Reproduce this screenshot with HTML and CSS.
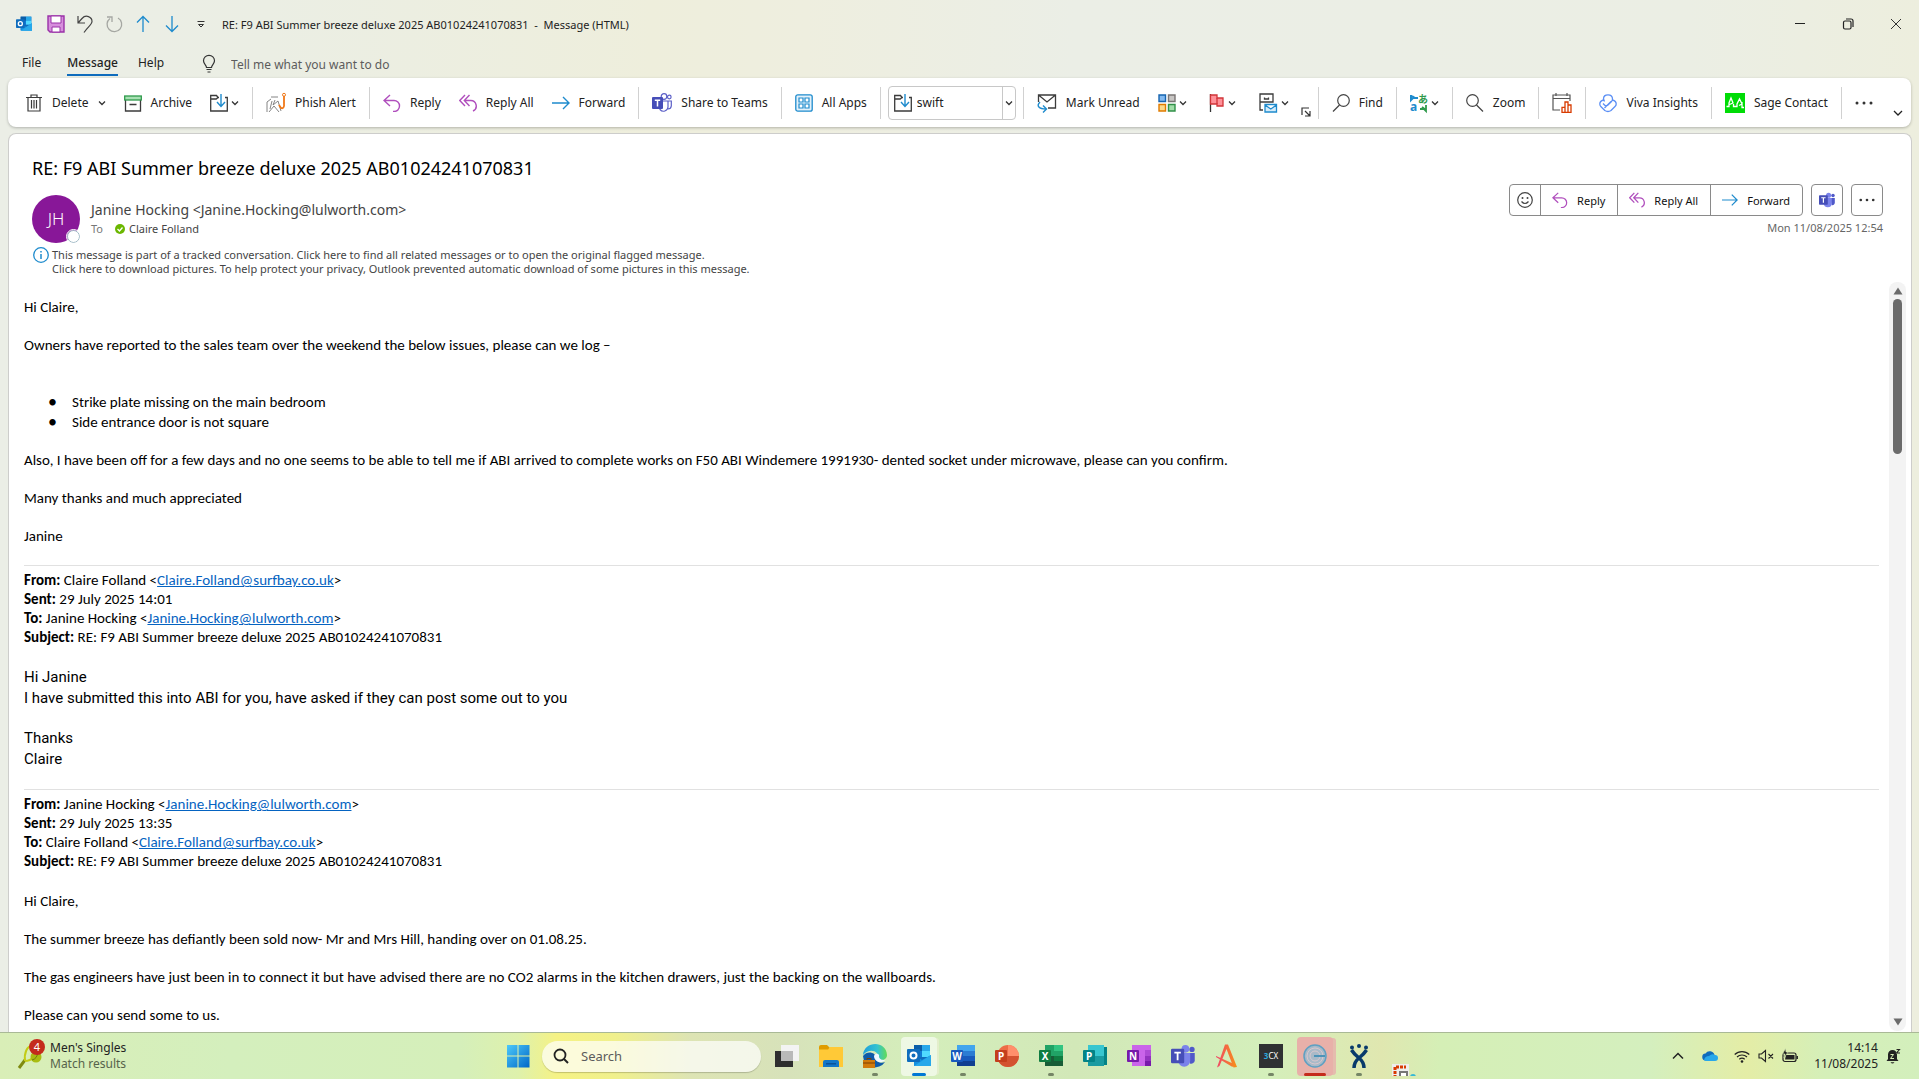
FILE: index.html
```
<!DOCTYPE html>
<html lang="en">
<head>
    <meta charset="UTF-8">
    <meta name="viewport" content="width=device-width, initial-scale=1.0">
    <title>RE: F9 ABI Summer breeze deluxe 2025 AB01024241070831 - Message (HTML)</title>
    <link rel="stylesheet" href="styles.css">
</head>
<body>

<!-- shared icons -->
<svg class="sprite" aria-hidden="true">
    <symbol id="i-chev" viewBox="0 0 8 8"><path d="M1 2.5l3 3 3-3" fill="none" stroke="#333" stroke-width="1.3"/></symbol>
    <symbol id="i-reply" viewBox="0 0 18 18"><path d="M7 1L1 6.500l6 5.500M1.500 6.500H11a5.500 5.500 0 0 1 0 11h-1" fill="none" stroke="#b04fbd" stroke-width="1.400"/></symbol>
    <symbol id="i-replyall" viewBox="0 0 18 18"><path d="M6 1L.8 6.500 6 12M10.500 1L5.300 6.500l5.200 5.500M5.500 6.500h6a5.500 5.500 0 0 1 2.500 10.500" fill="none" stroke="#b04fbd" stroke-width="1.400"/></symbol>
    <symbol id="i-forward" viewBox="0 0 18 18"><path d="M0 9h17M11 3l6 6-6 6" fill="none" stroke="#1e8bcd" stroke-width="1.400"/></symbol>
    <symbol id="i-folder" viewBox="0 0 18 18"><path d="M9 3.500H8L6.500 1.500H.7V17h16.600V3.500H15M.7 5h5.500L8 3.500" fill="none" stroke="#3b3b3b" stroke-width="1.300"/><path d="M11 0v12M7 8l4 4.500L15 8" fill="none" stroke="#1e8bcd" stroke-width="1.400"/></symbol>
    <symbol id="i-teams" viewBox="0 0 20 20"><circle cx="12" cy="4" r="3.200" fill="#7b83eb"/><circle cx="17.500" cy="4.500" r="2.200" fill="#5059c9"/><path d="M14 7.500h5.800v6a3 3 0 0 1-4 2.800z" fill="#5059c9"/><path d="M6 7.500h10v6.500a5 5 0 0 1-10 0z" fill="#7b83eb"/><rect y="4" width="11" height="12" rx="1" fill="#464eb8"/><path d="M2.800 7.200h5.400M5.500 7v6.500" stroke="#fff" stroke-width="1.500"/></symbol>
    <symbol id="i-teams-line" viewBox="0 0 20 20"><g fill="#fff" stroke="#5b5fc7" stroke-width="1.200"><path d="M8 8h8v6a4.500 4.500 0 0 1-8 2.500zM16 8h3.300v5q-.3 3-3.300 3"/><circle cx="12" cy="3.500" r="2.800"/><circle cx="17.300" cy="4" r="1.800"/></g><rect y="4" width="11" height="12" rx="1" fill="#464eb8"/><path d="M2.800 7.200h5.400M5.500 7v6.500" stroke="#fff" stroke-width="1.500"/></symbol>
    <symbol id="i-outlook" viewBox="0 0 24 24"><path d="M7 1h16v20H7z" fill="#0f6cbd"/><path d="M7 1h8v6H7z" fill="#0a5ea8"/><path d="M15 1h8v6h-8z" fill="#28a8ea"/><path d="M15 7h8v6h-8z" fill="#50d9ff"/><path d="M7 7h8v6H7z" fill="#0f78d4"/><path d="M7 11l8 5 9-5v11H7z" fill="#1490df"/><path d="M7 22l17-11v11z" fill="#28a8ea"/><rect y="5" width="13" height="13" rx="1" fill="#0f6cbd"/><circle cx="6.500" cy="11.500" r="3" fill="none" stroke="#fff" stroke-width="2"/></symbol>
    <symbol id="i-dots" viewBox="0 0 18 18"><g fill="#333"><circle cx="2" cy="9" r="1.500"/><circle cx="9" cy="9" r="1.500"/><circle cx="16" cy="9" r="1.500"/></g></symbol>
</svg>

<header class="titlebar">
    <svg class="ic16" viewBox="0 0 24 24"><use href="#i-outlook"/></svg>
    <div class="quick">
        <button aria-label="Save"><svg viewBox="0 0 18 18"><path d="M1 1h16v16H3l-2-2z" fill="#d68fdc" stroke="#9a31a8" stroke-width="1.400"/><path d="M4 1h10v7H4zM5 12h8v5H5z" fill="#fff" stroke="#9a31a8"/></svg></button>
        <button aria-label="Undo"><svg viewBox="0 0 18 18"><path d="M2 1v7h7M2 8l4-4.500C10-1 16 2 16 6.500c0 3-4 5-8 11" fill="none" stroke="#444" stroke-width="1.200"/></svg></button>
        <button aria-label="Redo"><svg viewBox="0 0 18 18"><path d="M2 2h5v5M5 3.500a7.300 7.300 0 1 0 8-.5" fill="none" stroke="#a5a7a2" stroke-width="1.300"/></svg></button>
        <button aria-label="Previous item"><svg viewBox="0 0 18 18"><path d="M9 17V1.500M3 7.500l6-6 6 6" fill="none" stroke="#1e8bcd" stroke-width="1.300"/></svg></button>
        <button aria-label="Next item"><svg viewBox="0 0 18 18"><path d="M9 1v15.500M3 10.500l6 6 6-6" fill="none" stroke="#1e8bcd" stroke-width="1.300"/></svg></button>
        <button aria-label="Customise toolbar"><svg viewBox="0 0 18 18"><path d="M5.500 6.500h7M6.500 9.500L9 12l2.500-2.500z" fill="none" stroke="#333"/></svg></button>
    </div>
    <h1 class="caption">RE: F9 ABI Summer breeze deluxe 2025 AB01024241070831 &nbsp;-&nbsp; Message (HTML)</h1>
    <div class="window-buttons">
        <button aria-label="Minimise"><svg viewBox="0 0 12 12"><path d="M1 5.500h10" stroke="#222"/></svg></button>
        <button aria-label="Restore"><svg viewBox="0 0 12 12"><rect x="1.500" y="3" width="7.500" height="8" rx="1.500" fill="none" stroke="#222" stroke-width="1.200"/><path d="M4 1h5q2 0 2 2v6" fill="none" stroke="#222" stroke-width="1.200"/></svg></button>
        <button aria-label="Close"><svg viewBox="0 0 12 12"><path d="M1 1l10 10M11 1L1 11" stroke="#333"/></svg></button>
    </div>
</header>

<nav class="tabs">
    <a href="#">File</a>
    <a href="#" class="active">Message</a>
    <a href="#">Help</a>
    <label class="tell-me">
        <svg viewBox="0 0 14 18"><path d="M4.500 12.500C4.500 10 1.500 9 1.500 5.800a5.500 5.500 0 0 1 11 0c0 3.200-3 4.200-3 6.700zM4.500 14.500h5M5.500 17h3" fill="none" stroke="#333" stroke-width="1.200"/></svg>
        <input type="text" placeholder="Tell me what you want to do">
    </label>
</nav>

<div class="ribbon">
    <button><svg viewBox="0 0 18 18"><path d="M1 3.500h16M6 3V1h6v2M3 3.500V17h12V3.500M6.500 6v8.500M9 6v8.500M11.500 6v8.500" fill="none" stroke="#3b3b3b" stroke-width="1.200"/></svg>Delete<svg class="chev"><use href="#i-chev"/></svg></button>
    <button><svg viewBox="0 0 18 18"><path d="M1.500 6v11h15V6M5.500 10.500h7" fill="none" stroke="#3b3b3b" stroke-width="1.300"/><rect x=".7" y="2" width="16.600" height="4" fill="#a8e0b3" stroke="#2f9a4c" stroke-width="1.300"/></svg>Archive</button>
    <button class="tight" aria-label="Move"><svg><use href="#i-folder"/></svg><svg class="chev"><use href="#i-chev"/></svg></button>
    <span class="sep"></span>
    <button><svg class="w20" viewBox="0 0 20 20"><path d="M1 19V9l4-3M5 4h7M6 8l-2 8M9 7l-2 5 5-4 3 10M3 19l5-6 5 6" fill="none" stroke="#777" stroke-width=".9"/><path d="M13 12l2 3c2 1 3.500-1 3-4V3" fill="none" stroke="#f07818" stroke-width="1.800"/><circle cx="18" cy="1.800" r="1.500" fill="none" stroke="#f07818"/></svg>Phish Alert</button>
    <span class="sep"></span>
    <button><svg><use href="#i-reply"/></svg>Reply</button>
    <button><svg><use href="#i-replyall"/></svg>Reply All</button>
    <button><svg><use href="#i-forward"/></svg>Forward</button>
    <span class="sep"></span>
    <button><svg class="w20"><use href="#i-teams-line"/></svg>Share to Teams</button>
    <span class="sep"></span>
    <button><svg viewBox="0 0 18 18"><rect x=".8" y=".8" width="16.400" height="16.400" rx="2" fill="#e3f1fa" stroke="#1e8bcd" stroke-width="1.300"/><path d="M4 4h4v4H4zM10 4h4v4h-4zM4 10h4v4H4zM10 10h4v4h-4z" fill="#fff" stroke="#1e8bcd" stroke-width="1.200"/></svg>All Apps</button>
    <span class="sep"></span>
    <div class="combo">
        <svg><use href="#i-folder"/></svg>
        <select aria-label="Quick step"><option>swift</option></select>
        <svg class="chev"><use href="#i-chev"/></svg>
    </div>
    <span class="sep"></span>
    <button><svg class="w20" viewBox="0 0 20 20"><path d="M1.500 9V2h17v13H11M1.500 2l8.500 7 8.500-7" fill="none" stroke="#3b3b3b" stroke-width="1.300"/><path d="M3 9c-4 4-1 7 6 7M6 12.500L9.500 16 6 19.500" fill="none" stroke="#1e8bcd" stroke-width="1.400"/></svg>Mark Unread</button>
    <button class="tight" aria-label="Categorise"><svg viewBox="0 0 18 18" stroke-width="1.400"><path d="M1 1h6.500v6.500H1z" fill="#83b9ef" stroke="#1664b0"/><path d="M10.500 1H17v6.500h-6.500z" fill="#c8c6c4" stroke="#7a7574"/><path d="M1 10.500h6.500V17H1z" fill="#fbd98b" stroke="#e07b00"/><path d="M10.500 10.500H17V17h-6.500z" fill="#a1dda8" stroke="#309048"/></svg><svg class="chev"><use href="#i-chev"/></svg></button>
    <button class="tight" aria-label="Follow up"><svg class="w20" viewBox="0 0 20 20"><path d="M5.500 1v18" stroke="#333" stroke-width="1.300"/><path d="M5.500 2h6.500v3h6v8h-6v-2H5.500z" fill="#ff9199" stroke="#d13438" stroke-width="1.300"/><path d="M12 5v6" stroke="#d13438" stroke-width="1.300"/></svg><svg class="chev"><use href="#i-chev"/></svg></button>
    <button class="tight" aria-label="Rules"><svg class="w24" viewBox="0 0 24 20"><path d="M9 17H6V1h13v8H6M10.500 4.500v1.500h4V4.500" fill="none" stroke="#3b3b3b" stroke-width="1.300"/><path d="M11 11.500H22.500V19H11zM11 12l5.800 4 5.700-4" fill="#d5ecfa" stroke="#1e8bcd" stroke-width="1.300"/></svg><svg class="chev"><use href="#i-chev"/></svg></button>
    <button class="launcher" aria-label="More options"><svg viewBox="0 0 10 10"><path d="M1 8V1h7M4 4l4.500 4.500M9 4v5H4" fill="none" stroke="#333" stroke-width="1.200"/></svg></button>
    <span class="sep"></span>
    <button><svg viewBox="0 0 18 18"><circle cx="11.500" cy="6.500" r="5.800" fill="none" stroke="#444" stroke-width="1.200"/><path d="M7.500 11L1 17.500" stroke="#444" stroke-width="1.200"/></svg>Find</button>
    <span class="sep"></span>
    <button class="tight" aria-label="Translate"><svg viewBox="0 0 18 18"><path d="M1 1v5l2-2h5M2 2l3 2" fill="none" stroke="#1e8bcd" stroke-width="2"/><text x="0" y="17" class="tr-latin">a</text><text x="8" y="9" class="tr-kana">あ</text><path d="M16 11v6l-2-2h-4M16 16l-4-3" fill="none" stroke="#2f9a4c" stroke-width="1.800"/></svg><svg class="chev"><use href="#i-chev"/></svg></button>
    <span class="sep"></span>
    <button><svg viewBox="0 0 18 18"><circle cx="6.500" cy="6.500" r="5.800" fill="none" stroke="#444" stroke-width="1.200"/><path d="M10.500 11l6.500 6.500" stroke="#444" stroke-width="1.200"/></svg>Zoom</button>
    <span class="sep"></span>
    <button aria-label="Calendar insights"><svg class="w20" viewBox="0 0 20 20"><path d="M8 17H1V2h17v6M1 5.500h17M4 0v3M15 0v3" fill="none" stroke="#555" stroke-width="1.200"/><path d="M10 19.300v-5h3v5zM13 19.300V9h3v10.300zM16 19.300V12h3v7.300z" fill="#fff" stroke="#d83b01" stroke-width="1.300"/></svg></button>
    <span class="sep"></span>
    <button><svg viewBox="0 0 18 18"><path d="M5.500 7.500L4.500 5Q4.500.8 9 .8T13.500 5q0 1.500-1 2.500L9 11Q7 12.500 5.500 11L4 9.500M4.500 6Q.8 7 .8 10q0 1.500 1 2.500l4 4Q9 18.500 12 16.500l4-4q1.200-1 1.200-2.500 0-3-3.700-4M5.500 14L12 7.500" fill="none" stroke="#5b8ff5" stroke-width="1.300"/></svg>Viva Insights</button>
    <span class="sep"></span>
    <button><svg class="w20" viewBox="0 0 20 20"><path d="M0 0h20v20H0z" fill="#00dc06"/><path d="M1.500 13.500H4V10L6 5l2 5-3.500 1.500M8.500 11v2.500H12V11l2.500-5L17 11l-3 1.500M17 9v5.500h2" fill="none" stroke="#fff" stroke-width="1.300"/></svg>Sage Contact</button>
    <span class="sep"></span>
    <button aria-label="More commands"><svg><use href="#i-dots"/></svg></button>
    <button class="collapse" aria-label="Ribbon display options"><svg viewBox="0 0 10 10"><path d="M1 3l4 4 4-4" fill="none" stroke="#222" stroke-width="1.300"/></svg></button>
</div>

<main class="message">
    <div class="message-head">
        <h2>RE: F9 ABI Summer breeze deluxe 2025 AB01024241070831</h2>
        <div class="sender">
            <div class="avatar">JH<span class="presence"></span></div>
            <div class="who">
                <div class="from">Janine Hocking &lt;Janine.Hocking@lulworth.com&gt;</div>
                <div class="to"><span>To</span><svg viewBox="0 0 10 10"><circle cx="5" cy="5" r="5" fill="#6bb700"/><path d="M2.500 5l2 2 3-3.500" fill="none" stroke="#fff" stroke-width="1.300"/></svg>Claire Folland</div>
            </div>
            <div class="actions">
                <div class="action-row">
                    <div class="action-group">
                        <button class="square" aria-label="React"><svg viewBox="0 0 16 16"><circle cx="8" cy="8" r="7.300" fill="none" stroke="#444" stroke-width="1.200"/><path d="M4.500 9.500q3.500 4 7 0" fill="none" stroke="#444" stroke-width="1.200"/><circle cx="5.500" cy="6" r="1" fill="#444"/><circle cx="10.500" cy="6" r="1" fill="#444"/></svg></button>
                        <button><svg><use href="#i-reply"/></svg>Reply</button>
                        <button><svg><use href="#i-replyall"/></svg>Reply All</button>
                        <button><svg><use href="#i-forward"/></svg>Forward</button>
                    </div>
                    <div class="action-group"><button class="square" aria-label="Share to Teams"><svg><use href="#i-teams"/></svg></button></div>
                    <div class="action-group"><button class="square" aria-label="More actions"><svg><use href="#i-dots"/></svg></button></div>
                </div>
                <time>Mon 11/08/2025 12:54</time>
            </div>
        </div>
        <div class="info">
            <svg viewBox="0 0 16 16"><circle cx="8" cy="8" r="7.300" fill="none" stroke="#1e8bcd" stroke-width="1.300"/><path d="M8 7v5M8 4v1.500" stroke="#1e8bcd" stroke-width="1.500"/></svg>
            <p>This message is part of a tracked conversation. Click here to find all related messages or to open the original flagged message.<br>Click here to download pictures. To help protect your privacy, Outlook prevented automatic download of some pictures in this message.</p>
        </div>
    </div>

    <div class="reader">
        <article class="mail">
            <p>Hi Claire,</p>
            <p>Owners have reported to the sales team over the weekend the below issues, please can we log –</p>
            <ul>
                <li>Strike plate missing on the main bedroom</li>
                <li>Side entrance door is not square</li>
            </ul>
            <p>Also, I have been off for a few days and no one seems to be able to tell me if ABI arrived to complete works on F50 ABI Windemere 1991930- dented socket under microwave, please can you confirm.</p>
            <p>Many thanks and much appreciated</p>
            <p>Janine</p>
            <div class="quoted">
                <b>From:</b> Claire Folland &lt;<a href="mailto:Claire.Folland@surfbay.co.uk">Claire.Folland@surfbay.co.uk</a>&gt;<br>
                <b>Sent:</b> 29 July 2025 14:01<br>
                <b>To:</b> Janine Hocking &lt;<a href="mailto:Janine.Hocking@lulworth.com">Janine.Hocking@lulworth.com</a>&gt;<br>
                <b>Subject:</b> RE: F9 ABI Summer breeze deluxe 2025 AB01024241070831
            </div>
            <div class="large">
                <p>Hi Janine<br>I have submitted this into ABI for you, have asked if they can post some out to you</p>
                <p>Thanks<br>Claire</p>
            </div>
            <div class="quoted">
                <b>From:</b> Janine Hocking &lt;<a href="mailto:Janine.Hocking@lulworth.com">Janine.Hocking@lulworth.com</a>&gt;<br>
                <b>Sent:</b> 29 July 2025 13:35<br>
                <b>To:</b> Claire Folland &lt;<a href="mailto:Claire.Folland@surfbay.co.uk">Claire.Folland@surfbay.co.uk</a>&gt;<br>
                <b>Subject:</b> RE: F9 ABI Summer breeze deluxe 2025 AB01024241070831
            </div>
            <p>Hi Claire,</p>
            <p>The summer breeze has defiantly been sold now- Mr and Mrs Hill, handing over on 01.08.25.</p>
            <p>The gas engineers have just been in to connect it but have advised there are no CO2 alarms in the kitchen drawers, just the backing on the wallboards.</p>
            <p>Please can you send some to us.</p>
        </article>
        <div class="scrollbar">
            <svg viewBox="0 0 10 8"><path d="M5 .5L9.500 7.500h-9z" fill="#6b6b6b"/></svg>
            <div class="thumb"></div>
            <svg viewBox="0 0 10 8"><path d="M5 7.500L9.500.5h-9z" fill="#6b6b6b"/></svg>
        </div>
    </div>
</main>

<footer class="taskbar">
    <a href="#" class="widget">
        <span class="widget-icon">
            <svg viewBox="0 0 24 28"><path d="M1 27l6-8" stroke="#7f8a10" stroke-width="3"/><path d="M7 20C6 12 9 5 14 5M7 20c4 0 6-1 9-4" fill="none" stroke="#c3cc17" stroke-width="2"/><circle cx="18" cy="16" r="5.500" fill="#a9bd12"/><path d="M14 19q5-1 6-8" fill="none" stroke="#6f7f0c"/></svg>
            <span class="count">4</span>
        </span>
        <span class="widget-text">Men's Singles<small>Match results</small></span>
    </a>

    <div class="apps">
        <button aria-label="Start"><svg viewBox="0 0 24 24"><defs><linearGradient id="win" x1="0" y1="0" x2="1" y2="1"><stop offset="0" stop-color="#4cc9f9"/><stop offset="1" stop-color="#0067c8"/></linearGradient></defs><path d="M1 1h10.500v10.500H1zM12.500 1H23.500v10.500H12.500zM1 12.500h10.500V23.500H1zM12.500 12.500H23.500V23.500H12.500z" fill="url(#win)"/></svg></button>
        <label class="search">
            <svg viewBox="0 0 16 16"><circle cx="7" cy="7" r="5.500" fill="none" stroke="#222" stroke-width="1.800"/><path d="M11 11l4 4" stroke="#222" stroke-width="2"/></svg>
            <input type="text" placeholder="Search">
        </label>
        <button aria-label="Task view"><svg viewBox="0 0 24 24"><path d="M0 7h18v16H0z" fill="#2e2e2e"/><path d="M6 1h18v16H6z" fill="#f3f3f3"/><path d="M6 7h12v10H6z" fill="#b9b9b9"/></svg></button>
        <button aria-label="File Explorer"><svg viewBox="0 0 24 24"><path d="M0 3q0-2 2-2h6l3 3v4H0z" fill="#e09c00"/><path d="M0 5.500h9l2-2.500h13v20H0z" fill="#ffc937"/><path d="M4 23v-5q0-2 2-2h12q2 0 2 2v5z" fill="#1377c8"/><path d="M7 19h10v1.500H7z" fill="#0a539b"/></svg></button>
        <button class="open" aria-label="Edge"><svg viewBox="0 0 24 24"><defs><linearGradient id="edge"><stop offset="0" stop-color="#1d9fdc"/><stop offset=".6" stop-color="#35c3cf"/><stop offset="1" stop-color="#63dc55"/></linearGradient></defs><path d="M0 12a12 12 0 0 0 22 6c-4 2-9 0-9-4 0-6-9-8-13-2z" fill="#0f5ba8"/><path d="M0 11C1-3 23-4 24 11c0 6-8 6-9 3 2-6-8-11-15-3z" fill="url(#edge)"/><path d="M11 12c1-3 6-3 5 1 1 3 4 3 6 3-3 4-11 2-11-4z" fill="#f0f8ff"/><path d="M0 16h12v8H0z" fill="#d07a0c"/><path d="M4 16v-1.500h4V16M0 19h12" fill="none" stroke="#7c3f02"/></svg></button>
        <button class="open current stacked" aria-label="Outlook"><svg><use href="#i-outlook"/></svg></button>
        <button class="open" aria-label="Word"><svg viewBox="0 0 24 24"><path d="M6 1h18v6H6z" fill="#41a5ee"/><path d="M6 7h18v5H6z" fill="#2b7cd3"/><path d="M6 12h18v5H6z" fill="#185abd"/><path d="M6 17h18v5H6z" fill="#103f91"/><rect y="6" width="12" height="12" rx="1" fill="#185abd"/><text x="6" y="16" class="logo-letter">W</text></svg></button>
        <button aria-label="PowerPoint"><svg viewBox="0 0 24 24"><circle cx="13" cy="12" r="11" fill="#ed6c47"/><path d="M13 1a11 11 0 0 1 11 11H13z" fill="#ff8f6b"/><path d="M24 12a11 11 0 0 1-22 0z" fill="#d35230"/><rect y="6" width="12" height="12" rx="1" fill="#c43e1c"/><text x="6" y="16" class="logo-letter">P</text></svg></button>
        <button class="open" aria-label="Excel"><svg viewBox="0 0 24 24"><path d="M6 1h9v11H6z" fill="#21a366"/><path d="M15 1h9v6h-9z" fill="#33c481"/><path d="M15 7h9v5h-9z" fill="#21a366"/><path d="M6 12h9v10H6z" fill="#185c37"/><path d="M15 12h9v5h-9z" fill="#107c41"/><path d="M15 17h9v5h-9z" fill="#185c37"/><rect y="6" width="12" height="12" rx="1" fill="#107c41"/><text x="6" y="16" class="logo-letter">X</text></svg></button>
        <button aria-label="Publisher"><svg viewBox="0 0 24 24"><path d="M12 3h12v18H12z" fill="#038387"/><path d="M5 1h16v11H5z" fill="#37c6d0"/><path d="M5 12h16v10H5z" fill="#1a9ba1"/><rect y="6" width="12" height="12" rx="1" fill="#038387"/><text x="6" y="16" class="logo-letter">P</text></svg></button>
        <button aria-label="OneNote"><svg viewBox="0 0 24 24"><path d="M5 1h19v21H5z" fill="#ca64ea"/><path d="M18 6h6v6h-6z" fill="#ae4bd5"/><path d="M18 12h6v5h-6z" fill="#9332bf"/><path d="M18 17h6v5h-6z" fill="#7719aa"/><rect y="6" width="12" height="12" rx="1" fill="#7719aa"/><text x="6" y="16" class="logo-letter">N</text></svg></button>
        <button aria-label="Teams"><svg><use href="#i-teams"/></svg></button>
        <button aria-label="Adobe"><svg viewBox="0 0 24 24"><defs><linearGradient id="aa"><stop offset="0" stop-color="#f0436b"/><stop offset="1" stop-color="#f79216"/></linearGradient></defs><path d="M2 23.500L10 .5h3l9 22.500-3.500.5L11.500 5 4.500 22zM1 12l18 8-1.500 3L1 13z" fill="url(#aa)"/></svg></button>
        <button class="open" aria-label="3CX"><svg viewBox="0 0 24 24"><path d="M0 0h24v24H0z" fill="#2f3133"/><text x="12" y="15" class="cx"><tspan class="blue">3</tspan>CX</text></svg></button>
        <button class="open alert stacked" aria-label="Scanner"><svg viewBox="0 0 24 24"><circle cx="12" cy="12" r="11" fill="#a9bac8" stroke="#5fa0c2" stroke-width="1.500"/><circle cx="12" cy="12" r="8" fill="none" stroke="#d9c7cd"/><circle cx="12" cy="12" r="5" fill="none" stroke="#d9c7cd"/><path d="M11 12h11" stroke="#4d93b8" stroke-width="2"/></svg></button>
        <button class="open" aria-label="Jira"><svg viewBox="0 0 24 24"><g fill="#083a6b"><circle cx="5" cy="3.500" r="2"/><circle cx="12" cy="2" r="2"/><circle cx="19" cy="3.500" r="2"/></g><path d="M4.500 6Q7 10 12 14q5 4 5 10M19.500 6Q17 10 12 14q-5 4-5 10" fill="none" stroke="#083a6b" stroke-width="3.500"/></svg></button>
        <button class="rising" aria-label="Snipping Tool"><svg viewBox="0 0 24 24"><path d="M1 0h17v24H1z" fill="#eee"/><path d="M4 14V3h11" fill="none" stroke="#d83b01" stroke-width="3" stroke-dasharray="3 1"/><path d="M9 8h7v9H9z" fill="#fff" stroke="#777" stroke-width="2"/><circle cx="22" cy="13" r="3" fill="#35b8d6"/></svg></button>
    </div>

    <div class="tray">
        <button aria-label="Hidden icons"><svg viewBox="0 0 16 16"><path d="M3 10.500l5-5 5 5" fill="none" stroke="#222" stroke-width="1.500"/></svg></button>
        <svg viewBox="0 0 16 16" class="cloud"><path d="M4 12.500a3.500 3.500 0 0 1-.5-7A5 5 0 0 1 12.500 7a3 3 0 0 1 0 5.500z" fill="#0f6cbd"/><path d="M2 12q1-4 5-4 3-3 6-1a3 3 0 0 1 0 6H4q-1.500 0-2-1z" fill="#28a8ea"/></svg>
        <div class="status">
            <svg viewBox="0 0 16 16"><path d="M.7 6.500a10.500 10.500 0 0 1 14.600 0M3 9a7.200 7.200 0 0 1 10 0M5.300 11.300a4 4 0 0 1 5.400 0" fill="none" stroke="#222" stroke-width="1.200"/><circle cx="8" cy="13.500" r="1.300" fill="#222"/></svg>
            <svg viewBox="0 0 16 16"><path d="M1 6h2.500L7.500 2.500v11L3.500 10H1zM10.500 6l4.500 4.500M15 6l-4.500 4.500" fill="none" stroke="#222" stroke-width="1.100"/></svg>
            <svg viewBox="0 0 16 16"><rect x="1" y="5" width="13" height="8.500" rx="2" fill="none" stroke="#222" stroke-width="1.200"/><path d="M4 7h8.500v4.500H3z" fill="#222"/><path d="M15.200 8v3" stroke="#222" stroke-width="1.500"/><path d="M3.500.5L.5 6h2.500L2 10l4-6H4z" fill="#222" stroke="#d9efb7" stroke-width=".6"/></svg>
        </div>
        <time>14:14<br>11/08/2025</time>
        <svg viewBox="0 0 16 16"><path d="M3 11V6.500a4.500 4.500 0 0 1 9 0V11l1.500 2h-12zM5.500 14.200h4q-2 2.500-4 0z" fill="#222"/><path d="M5.500 6.500h3l-3 4h3.500M11 1h3.500L11 5h4" fill="none" stroke="#d9efb7" stroke-width="1"/><path d="M11.500 1.500h3l-3 3.500h3.500" fill="none" stroke="#222" stroke-width="1.100"/></svg>
    </div>
</footer>

</body>
</html>
```
FILE: styles.css
```
* {
    box-sizing: border-box;
}
html, body {
    margin: 0;
    height: 100%;
}
body {
    display: flex;
    flex-direction: column;
    overflow: hidden;
    font-family: "Segoe UI", "Noto Sans", "Open Sans", sans-serif;
    font-size: 12px;
    color: #222;
    background: linear-gradient(90deg, #ebeee6 0%, #ebeee4 14%, #eeeedc 34%, #eeeedf 42%, #ebeee6 56%, #ebeee4 88%, #edeede 100%);
}
button, input, select {
    font: inherit;
    color: inherit;
    background: none;
    border: none;
    padding: 0;
    margin: 0;
    outline: none;
}
button {
    display: flex;
    align-items: center;
    white-space: nowrap;
}
svg {
    flex: none;
    width: 18px;
    height: 18px;
    overflow: visible;
}
h1, h2, p {
    margin: 0;
    font-weight: normal;
}
.sprite {
    position: absolute;
    width: 0;
    height: 0;
}

/* title bar */
.titlebar {
    display: flex;
    align-items: center;
    height: 48px;
    flex: none;
    padding: 0 17px 0 16px;
}
.titlebar .ic16 {
    width: 16px;
    height: 18px;
}
.quick {
    display: flex;
    gap: 11px;
    margin: 0 12px 0 15px;
}
.caption {
    flex: 1;
    font-size: 11px;
}
.window-buttons {
    display: flex;
    gap: 36px;
}
.window-buttons svg {
    width: 12px;
    height: 12px;
}

/* menu tabs */
.tabs {
    display: flex;
    align-items: center;
    flex: none;
    height: 30px;
    padding: 2px 0 0 22px;
}
.tabs a {
    color: inherit;
    text-decoration: none;
    line-height: 22px;
    border-bottom: 2px solid transparent;
    margin-right: 20px;
}
.tabs a:first-child {
    margin-right: 26px;
}
.tabs a.active {
    font-weight: 500;
    border-color: #0f6cbd;
}
.tell-me {
    display: flex;
    align-items: center;
    gap: 15px;
    margin-left: 18px;
}
.tell-me svg {
    width: 14px;
}
.tell-me input {
    width: 240px;
}
input::placeholder {
    color: #5c5c5c;
    opacity: 1;
}

/* ribbon */
.ribbon {
    position: relative;
    display: flex;
    align-items: center;
    flex: none;
    height: 49px;
    margin: 0 8px;
    padding: 0 8px;
    background: #fff;
    border-radius: 8px;
    box-shadow: 0 1px 3px rgba(0, 0, 0, 0.25);
}
.ribbon button {
    gap: 9px;
    padding: 0 9px;
    height: 32px;
}
.ribbon .tight {
    gap: 3px;
}
.w20 {
    width: 20px;
    height: 20px;
}
.w24 {
    width: 24px;
    height: 20px;
}
svg.chev {
    width: 8px;
    height: 8px;
}
.sep {
    width: 1px;
    height: 32px;
    margin: 0 4px;
    background: #d1d1d1;
}
.combo {
    display: flex;
    align-items: center;
    width: 128px;
    height: 34px;
    margin: 0 3px;
    padding-left: 5px;
    border: 1px solid #c8c8c8;
    border-radius: 4px;
}
.combo select {
    appearance: none;
    flex: 1;
    height: 100%;
    padding-left: 5px;
    border-right: 1px solid #c8c8c8;
}
.combo .chev {
    margin: 0 2px;
}
.ribbon .launcher {
    align-self: flex-end;
    padding: 0 3px;
    height: 30px;
}
.launcher svg, .collapse svg {
    width: 10px;
    height: 10px;
}
.ribbon .collapse {
    position: absolute;
    right: 8px;
    bottom: 8px;
    padding: 0;
    height: 12px;
}
.tr-latin {
    font-size: 12px;
    font-weight: bold;
    fill: #1e8bcd;
}
.tr-kana {
    font-family: "Noto Sans CJK JP", sans-serif;
    font-size: 10px;
    font-weight: bold;
    fill: #2f9a4c;
}

/* message pane */
.message {
    flex: 1;
    min-height: 0;
    display: flex;
    flex-direction: column;
    margin: 6px 7px 0 8px;
    background: #fff;
    border: 1px solid #cdcdcb;
    border-bottom: none;
    border-radius: 8px 8px 0 0;
}
.message-head {
    padding: 20px 28px 0 23px;
}
.message h2 {
    font-size: 18px;
    line-height: 28px;
    color: #000;
}
.sender {
    display: flex;
    margin-top: 2px;
    height: 62px;
}
.avatar {
    position: relative;
    width: 48px;
    height: 48px;
    margin: 11px 11px 0 0;
    border-radius: 50%;
    background: #881798;
    color: #fff;
    font-size: 17px;
    font-weight: 300;
    line-height: 48px;
    text-align: center;
}
.presence {
    position: absolute;
    right: 0;
    bottom: 0;
    width: 13px;
    height: 13px;
    border: 1px solid #9db8c4;
    border-radius: 50%;
    background: #fff;
    outline: 1px solid #fff;
}
.who {
    flex: 1;
    padding-top: 14px;
    color: #444;
}
.from {
    font-size: 14px;
    line-height: 23px;
}
.to {
    display: flex;
    align-items: center;
    font-size: 11px;
    line-height: 16px;
}
.to span {
    width: 24px;
    color: #777;
}
.to svg {
    width: 10px;
    height: 10px;
    margin-right: 4px;
}
.actions {
    display: flex;
    flex-direction: column;
    align-items: flex-end;
    gap: 4px;
}
.actions time {
    font-size: 11px;
    line-height: 16px;
    color: #666;
}
.action-row {
    display: flex;
    gap: 8px;
}
.action-group {
    display: flex;
    height: 32px;
    border: 1px solid #8a8a8a;
    border-radius: 4px;
}
.action-group button {
    gap: 9px;
    padding: 0 12px 0 11px;
    font-size: 11px;
    color: #111;
}
.action-group .square {
    width: 30px;
    padding: 0;
    justify-content: center;
}
.action-group button + button {
    border-left: 1px solid #8a8a8a;
}
.action-group svg {
    width: 16px;
    height: 16px;
}
.info {
    display: flex;
    gap: 3px;
    font-size: 11px;
    line-height: 14px;
    color: #444;
}
.info svg {
    width: 16px;
    height: 16px;
    margin: 1px 0 0 1px;
}
.info p {
    padding-top: 2px;
}

/* mail text */
.reader {
    flex: 1;
    min-height: 0;
    display: flex;
    margin-top: 6px;
}
.mail {
    flex: 1;
    overflow: hidden;
    padding: 16px 10px 0 15px;
    font-family: Calibri, Carlito, Lato, sans-serif;
    font-size: 15px;
    line-height: 19px;
    color: #000;
}
.mail p {
    margin-bottom: 19px;
}
.mail ul {
    margin: 37px 0 19px;
    padding-left: 24px;
    line-height: 20px;
    list-style: none;
}
.mail li {
    display: flex;
}
.mail li::before {
    content: "•";
    width: 24px;
    font-size: 18px;
}
.mail a {
    color: #0563c1;
}
.quoted {
    margin: 17px 0 20px;
    padding-top: 5px;
    border-top: 1px solid #e1e1e1;
}
.mail .large {
    font-family: Aptos, Roboto, sans-serif;
    font-size: 15px;
    line-height: 21px;
}
.mail .large + .quoted {
    margin-bottom: 21px;
}
.scrollbar {
    display: flex;
    flex-direction: column;
    align-items: center;
    width: 17px;
    margin: 0 5px 1px 0;
    padding: 5px 0;
    border-radius: 8px;
    background: #f3f3f3;
}
.scrollbar svg {
    width: 10px;
    height: 8px;
}
.thumb {
    width: 9px;
    height: 21%;
    margin: 4px 0 auto;
    border-radius: 5px;
    background: #6b6b6b;
}

/* taskbar */
.taskbar {
    display: grid;
    grid-template-columns: 1fr auto 1fr;
    align-items: center;
    flex: none;
    height: 47px;
    border-top: 1px solid #a9b996;
    background: linear-gradient(90deg, #d9eeb7 0%, #d4efbd 12%, #d5efba 24%, #def1ac 27%, #f5f285 29%, #f0f08c 32%, #dde4b4 36%, #d7e2ba 41%, #d4eebb 48%, #d2e8b8 56%, #d4efbb 66%, #e0e7b0 72%, #d5efb6 75%, #d4efbe 86%, #e4eda6 91%, #d5efb8 95%, #d3efbc 100%);
}
.widget {
    display: flex;
    align-items: center;
    gap: 6px;
    padding-left: 18px;
    color: inherit;
    text-decoration: none;
    font-size: 12px;
    line-height: 16px;
}
.widget small {
    display: block;
    font-size: 12px;
    color: #56634b;
}
.widget-icon {
    position: relative;
    width: 26px;
    height: 30px;
}
.widget-icon svg {
    width: 24px;
    height: 28px;
}
.count {
    position: absolute;
    top: -2px;
    right: -1px;
    width: 16px;
    border-radius: 50%;
    background: #c42b1c;
    color: #fff;
    font-size: 11px;
    text-align: center;
}
.apps {
    display: flex;
    align-items: center;
    padding-left: 2px;
}
.apps button {
    position: relative;
    justify-content: center;
    width: 36px;
    height: 39px;
    margin: 0 4px;
    border-radius: 4px;
}
.apps svg {
    width: 24px;
    height: 24px;
}
.apps .search {
    display: flex;
    align-items: center;
    gap: 12px;
    width: 219px;
    height: 31px;
    margin: 0 4px 0 2px;
    padding: 0 11px;
    border-radius: 16px;
    background: rgba(255, 255, 255, 0.7);
    box-shadow: 0 1px 1px rgba(0, 0, 0, 0.2);
}
.search svg {
    width: 16px;
    height: 16px;
}
.search input {
    width: 100%;
    font-size: 13px;
}
.apps .open::after {
    content: "";
    position: absolute;
    bottom: 0;
    width: 6px;
    height: 3px;
    border-radius: 2px;
    background: #758566;
}
.apps .current {
    background: rgba(255, 255, 255, 0.6);
}
.apps .current::after {
    width: 14px;
    background: #0078d4;
}
.apps .alert {
    background: #e8b0a9;
}
.apps .alert::after {
    width: 22px;
    background: #c42b1c;
}
.apps .stacked {
    box-shadow: 3px 0 0 -1px #e3eecb;
}
.apps .alert.stacked {
    box-shadow: 4px 0 0 -1px #e5bcae;
}
.apps .rising {
    align-self: flex-end;
    height: 12px;
    align-items: flex-start;
    overflow: hidden;
}
.logo-letter {
    font-size: 10px;
    font-weight: bold;
    text-anchor: middle;
    fill: #fff;
}
.cx {
    font-size: 8px;
    text-anchor: middle;
    fill: #fff;
}
.cx .blue {
    font-weight: bold;
    fill: #2aa5dc;
}
.tray {
    display: flex;
    align-items: center;
    justify-content: flex-end;
    padding-right: 18px;
}
.tray svg {
    width: 16px;
    height: 16px;
}
.cloud {
    margin: 0 16px;
}
.status {
    display: flex;
    gap: 8px;
}
.tray time {
    margin: 0 7px 0 16px;
    font-size: 12px;
    line-height: 16px;
    text-align: right;
}
```
